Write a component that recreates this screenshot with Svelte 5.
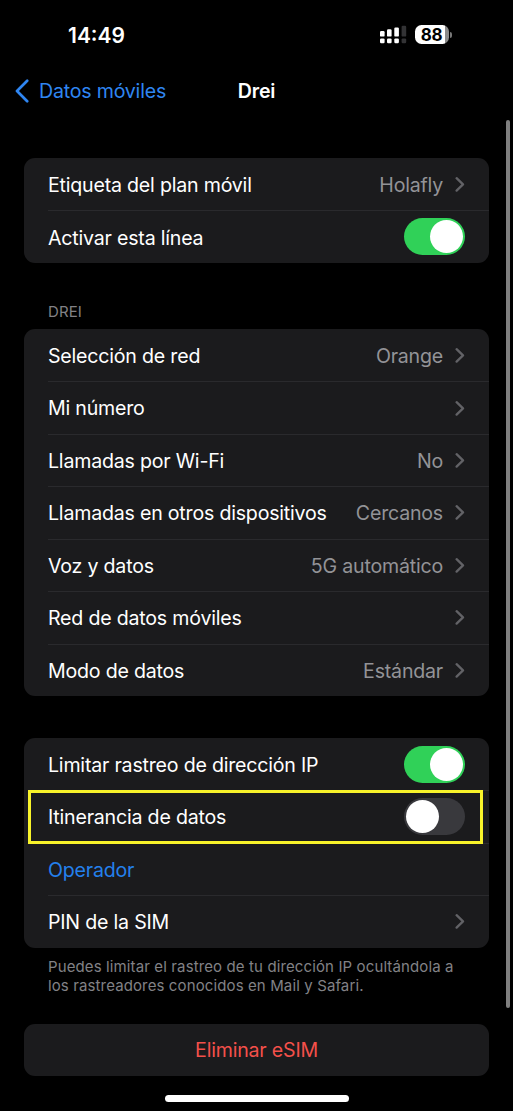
<script lang="ts">
	type Row = {
		label: string
		value?: string
		kind: 'link' | 'toggle' | 'action'
		on?: boolean
		highlighted?: boolean
	}

	type Group = {
		title?: string
		footer?: string[]
		rows: Row[]
	}

	// State
	let groups: Group[] = $state([
		{
			rows: [
				{ label: 'Etiqueta del plan móvil', value: 'Holafly', kind: 'link' },
				{ label: 'Activar esta línea', kind: 'toggle', on: true },
			],
		},
		{
			title: 'DREI',
			rows: [
				{ label: 'Selección de red', value: 'Orange', kind: 'link' },
				{ label: 'Mi número', kind: 'link' },
				{ label: 'Llamadas por Wi-Fi', value: 'No', kind: 'link' },
				{ label: 'Llamadas en otros dispositivos', value: 'Cercanos', kind: 'link' },
				{ label: 'Voz y datos', value: '5G automático', kind: 'link' },
				{ label: 'Red de datos móviles', kind: 'link' },
				{ label: 'Modo de datos', value: 'Estándar', kind: 'link' },
			],
		},
		{
			footer: [
				'Puedes limitar el rastreo de tu dirección IP ocultándola a',
				'los rastreadores conocidos en Mail y Safari.',
			],
			rows: [
				{ label: 'Limitar rastreo de dirección IP', kind: 'toggle', on: true },
				{ label: 'Itinerancia de datos', kind: 'toggle', on: false, highlighted: true },
				{ label: 'Operador', kind: 'action' },
				{ label: 'PIN de la SIM', kind: 'link' },
			],
		},
	])
</script>

{#snippet chevron()}
	<svg class="chevron" width="10" height="16" viewBox="0 0 10 16">
		<path d="M1.6 2.2 L8 8.4 L1.6 14.6" />
	</svg>
{/snippet}

<div class="screen">
	<header class="status">
		<span class="time">14:49</span>
		<div class="indicators">
			<svg width="27" height="19" viewBox="0 0 27 19">
				<g fill="#fff">
					<rect x="0" y="6" width="4.6" height="5.6" rx="1.2" />
					<rect x="7" y="4.3" width="4.6" height="7.3" rx="1.2" />
					<rect x="14.3" y="2.6" width="4.6" height="9" rx="1.2" />
					<rect x="0" y="13.4" width="4.6" height="4.8" rx="1.2" />
					<rect x="7" y="13.4" width="4.6" height="4.8" rx="1.2" />
					<rect x="14.3" y="13.4" width="4.6" height="4.8" rx="1.2" />
				</g>
				<g fill="#333335">
					<rect x="21.6" y="0.8" width="4.6" height="10.8" rx="1.2" />
					<rect x="21.6" y="13.4" width="4.6" height="4.8" rx="1.2" />
				</g>
			</svg>
			<div class="battery"><span>88</span></div>
			<span class="battery-tip"></span>
		</div>
	</header>

	<nav class="nav">
		<button class="back">
			<svg width="14" height="24" viewBox="0 0 14 24">
				<path d="M12.2 1.8 L2 12 L12.2 22.2" />
			</svg>
			<span>Datos móviles</span>
		</button>
		<h1>Drei</h1>
	</nav>

	<main>
		{#each groups as group}
			<section>
				{#if group.title}
					<h2>{group.title}</h2>
				{/if}
				<div class="card">
					{#each group.rows as row}
						<div class="row" class:highlighted={row.highlighted}>
							<span class="label" class:link={row.kind === 'action'}>{row.label}</span>
							{#if row.kind === 'toggle'}
								<button
									class="toggle"
									class:on={row.on}
									role="switch"
									aria-checked={row.on}
									aria-label={row.label}
									onclick={() => (row.on = !row.on)}
								></button>
							{:else if row.kind === 'link'}
								{#if row.value}
									<span class="value">{row.value}</span>
								{/if}
								{@render chevron()}
							{/if}
						</div>
					{/each}
				</div>
				{#if group.footer}
					<p class="footer">
						{#each group.footer as line}
							<span>{line}</span>
						{/each}
					</p>
				{/if}
			</section>
		{/each}

		<button class="card delete">Eliminar eSIM</button>
	</main>

	<div class="home-indicator"></div>
	<div class="scrollbar"></div>
</div>

<style>
	:global(body) {
		background: #000;
	}

	button {
		border: 0;
		padding: 0;
		background: none;
		font: inherit;
		letter-spacing: inherit;
		color: inherit;
	}

	.screen {
		position: relative;
		display: flex;
		flex-direction: column;
		box-sizing: border-box;
		width: 513px;
		height: 1111px;
		overflow: hidden;
		background: #000;
		color: #fff;
		font-family: Inter, 'Liberation Sans', sans-serif;
		font-size: 19.6px;
		letter-spacing: -0.21px;
	}

	.status {
		display: flex;
		align-items: center;
		justify-content: space-between;
		height: 69px;
		padding: 0 61px 0 68px;
	}

	.time {
		padding-top: 1px;
		font-size: 21px;
		font-weight: 600;
		letter-spacing: 0;
	}

	.indicators {
		display: flex;
		align-items: center;
	}

	.battery {
		display: flex;
		align-items: center;
		justify-content: center;
		width: 34px;
		height: 19px;
		margin-left: 8px;
		border-radius: 6.5px;
		background: linear-gradient(to right, #fff 30px, #8a8a8a 30px);
		color: #000;
		font-size: 17px;
		font-weight: 700;
		letter-spacing: -0.4px;
	}

	.battery span {
		margin-right: 1px;
	}

	.battery-tip {
		width: 2px;
		height: 6px;
		margin-left: 1px;
		border-radius: 0 2px 2px 0;
		background: #777;
	}

	.nav {
		display: grid;
		grid-template-columns: 1fr auto 1fr;
		align-items: center;
		height: 43px;
		padding: 0 15px;
	}

	.back {
		display: flex;
		align-items: center;
		gap: 10px;
		color: #2f86f2;
	}

	.back path {
		fill: none;
		stroke: currentColor;
		stroke-width: 2.7;
		stroke-linecap: round;
		stroke-linejoin: round;
	}

	h1 {
		margin: 0;
		font-size: 19.6px;
		font-weight: 600;
	}

	main {
		display: flex;
		flex-direction: column;
		padding: 46px 24px 0;
	}

	.card {
		border-radius: 11px;
		background: #1b1b1d;
	}

	h2 {
		margin: 0;
		padding: 40px 24px 8px;
		color: #828286;
		font-size: 15px;
		font-weight: 400;
		line-height: 18px;
		letter-spacing: 0.1px;
	}

	section:nth-of-type(3) {
		padding-top: 42px;
	}

	.row {
		position: relative;
		display: flex;
		align-items: center;
		height: 52.45px;
		margin-left: 24px;
		padding-right: 24px;
	}

	.row + .row {
		box-shadow: inset 0 1px #2a2a2d;
	}

	.label,
	.value {
		padding-top: 1.8px;
		white-space: nowrap;
	}

	.label {
		flex: 1;
	}

	.link {
		color: #2480ec;
	}

	.value {
		margin-right: 12px;
		color: #939397;
	}

	.chevron path {
		fill: none;
		stroke: #626266;
		stroke-width: 2.3;
		stroke-linecap: round;
		stroke-linejoin: round;
	}

	.toggle {
		width: 61px;
		height: 37px;
		border-radius: 19px;
		background: #39393d;
	}

	.toggle::before {
		content: '';
		display: block;
		width: 33px;
		height: 33px;
		margin-left: 2px;
		border-radius: 50%;
		background: #fff;
	}

	.toggle.on {
		background: #30d158;
	}

	.toggle.on::before {
		margin-left: 26px;
	}

	.highlighted::after {
		content: '';
		position: absolute;
		inset: 0 6px -1.3px -20px;
		border: 3px solid #f8f32a;
		z-index: 1;
		pointer-events: none;
	}

	.footer {
		display: flex;
		flex-direction: column;
		margin: 0;
		padding: 9px 24px 0;
		color: #828286;
		font-size: 15px;
		line-height: 19px;
		letter-spacing: 0.12px;
		white-space: nowrap;
	}

	.delete {
		height: 52px;
		margin-top: 29.5px;
		color: #f4504a;
	}

	.home-indicator {
		width: 184px;
		height: 7px;
		margin: auto auto 9px 165px;
		border-radius: 4px;
		background: #fff;
	}

	.scrollbar {
		position: absolute;
		top: 120px;
		left: 506px;
		width: 4px;
		height: 888px;
		border-radius: 2px;
		background: #7f7f7f;
	}
</style>
